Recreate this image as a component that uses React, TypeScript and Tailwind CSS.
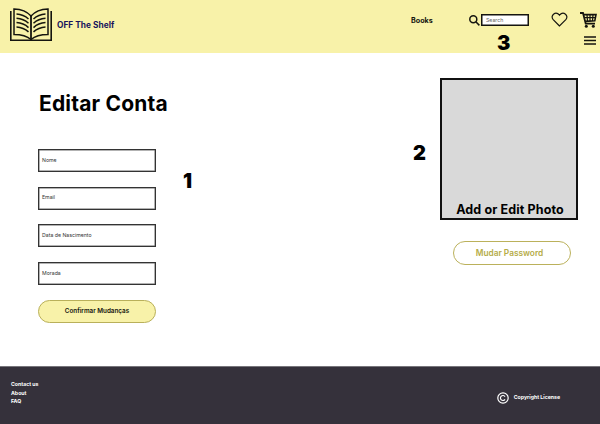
import React from "react";

function BookLogo() {
  return (
    <svg className="h-[34px] w-[42px] shrink-0" viewBox="0 0 42 34" fill="none" stroke="#15150f" strokeWidth="1.5">
      <path d="M.8 3V32.200H41.200V3" strokeWidth="1.600" />
      <path d="M21 8C17 3.500 10 1.200 4 1V26.500C11 26.500 17 28 21 31.500C25 28 31 26.500 38 26.500V1C32 1.200 25 3.500 21 8Z" />
      <path d="M21 8V32" strokeWidth="1.800" />
      <path d="M6.500 6C11 6.300 15 7.800 18.500 11M6.500 10.300C11 10.600 15 12.100 18.500 15.300M6.500 14.600C11 14.900 15 16.400 18.500 19.600M6.500 18.900C11 19.200 15 20.700 18.500 23.900" />
      <path d="M35.500 6C31 6.300 27 7.800 23.500 11M35.500 10.300C31 10.600 27 12.100 23.500 15.300M35.500 14.600C31 14.900 27 16.400 23.500 19.600M35.500 18.900C31 19.200 27 20.700 23.500 23.900" />
    </svg>
  );
}

function CartIcon() {
  return (
    <svg className="h-4 w-[17px]" viewBox="0 0 17 16" fill="none" stroke="#15150f">
      <path d="M0 1H3L5.700 11.600H15" strokeWidth="1.800" />
      <path d="M3.500 2.600H16L14.800 8.800L5.200 9.400" strokeWidth="1.600" />
      <path d="M4 5.700H15.500M7 2.600L7.500 9.300M10 2.600V9.200M13 2.600L12.500 9" strokeWidth="1.200" />
      <circle cx="6.300" cy="14.200" r="1.500" fill="#15150f" stroke="none" />
      <circle cx="13.300" cy="14.200" r="1.500" fill="#15150f" stroke="none" />
    </svg>
  );
}

function Header() {
  return (
    <header className="flex h-[53px] bg-[#f8f2a9]">
      <div className="flex w-[411px] items-start pt-2 pl-[10px]">
        <BookLogo />
        <span className="mt-[11px] ml-[5px] text-[8.300px] leading-[12px] font-bold tracking-[0.005em] text-[#17145c]">OFF The Shelf</span>
      </div>
      <span className="mt-[15px] w-[58px] text-[7.200px] leading-[12px] font-bold text-[#15150f]">Books</span>
      <svg className="mt-[15px] h-[11px] w-[11px]" viewBox="0 0 11 11" fill="none" stroke="#15150f" strokeWidth="1.500">
        <circle cx="4.300" cy="4.300" r="3.500" />
        <path d="M6.800 6.800L10.400 10.400" />
      </svg>
      <div className="mt-[14px] ml-px flex h-[12px] w-[48px] items-center border-[1.500px] border-[#15150f] bg-white pt-px pl-[4px] text-[5.200px] text-[#666] shadow-[inset_0_0_0_0.500px_#15150f]">Search</div>
      <svg className="mt-[12px] ml-[22px] h-[15px] w-[17px]" viewBox="0 0 17 15" fill="none" stroke="#15150f" strokeWidth="1.200">
        <path d="M8.500 14L2.200 7.700C-1.300 3.800 4.500-1.500 8.500 3.200C12.500-1.500 18.300 3.800 14.800 7.700Z" />
      </svg>
      <div className="ml-[12px] flex flex-col items-end pt-[12px]">
        <CartIcon />
        <svg className="mt-2 mr-px h-[9px] w-[12px]" viewBox="0 0 12 9" stroke="#15150f" strokeWidth="1.600">
          <path d="M0 1H12M0 4.500H12M0 8H12" />
        </svg>
      </div>
    </header>
  );
}

function Field({ label }: { label: string }) {
  return (
    <div className="flex h-[23px] w-[118px] items-center border border-[#333] bg-white pl-[3px] text-[5.200px] text-[#333] shadow-[inset_0_0_0_0.500px_#666]">
      {label}
    </div>
  );
}

export default function App() {
  return (
    <div className="relative flex h-[424px] w-[600px] flex-col overflow-hidden bg-white font-['Inter',sans-serif]">
      <Header />
      <main className="flex h-[313px] justify-between pr-[22px] pl-[38px]">
        <section className="flex flex-col pt-[38px]">
          <h1 className="ml-px h-[58px] text-[21px] leading-[26px] font-bold tracking-[0.009em] whitespace-nowrap text-black">Editar Conta</h1>
          <div className="flex flex-col gap-[14.700px]">
            <Field label="Nome" />
            <Field label="Email" />
            <Field label="Data de Nascimento" />
            <Field label="Morada" />
            <button className="flex h-[23px] w-[118px] items-center justify-center rounded-full border border-[#b9b05a] bg-[#f8f2a9] text-[6.300px] font-semibold text-[#15150f]">
              Confirmar Mudanças
            </button>
          </div>
        </section>
        <section className="flex flex-col items-end pt-[25px]">
          <div className="flex h-[142px] w-[138px] items-end justify-center border-2 border-[#111] bg-[#d9d9d9] pl-[2px] text-[12.500px] leading-[16px] font-bold tracking-[0.010em] whitespace-nowrap text-black">
            Add or Edit Photo
          </div>
          <button className="mt-[21px] mr-[7px] flex h-[24px] w-[118px] items-center justify-center rounded-full border border-[#bbb15b] pr-[5px] text-[8.300px] font-semibold text-[#b5ac48]">
            Mudar Password
          </button>
        </section>
      </main>
      <footer className="flex h-[58px] justify-between border-t border-[#77757b] bg-[#35313b] pr-[40px] pl-[11px] text-[5.200px] font-bold text-white">
        <nav className="flex flex-col pt-[13px] leading-[8.500px]">
          <a>Contact us</a>
          <a>About</a>
          <a>FAQ</a>
        </nav>
        <div className="mt-[24px] flex h-[13px] items-center gap-[5px] self-start">
          <svg className="h-[12px] w-[12px]" viewBox="0 0 12 12" fill="none" stroke="white" strokeWidth="1.200">
            <circle cx="6" cy="6" r="5.200" />
            <path d="M8 4.600A2.500 2.500 0 1 0 8 7.400" />
          </svg>
          <span>Copyright License</span>
        </div>
      </footer>
      <span className="absolute top-[171px] left-[183px] text-[20px] leading-[20px] font-black text-black">1</span>
      <span className="absolute top-[143px] left-[413px] text-[20px] leading-[20px] font-black text-black">2</span>
      <span className="absolute top-[33px] left-[497px] text-[20px] leading-[20px] font-black text-black">3</span>
    </div>
  );
}
